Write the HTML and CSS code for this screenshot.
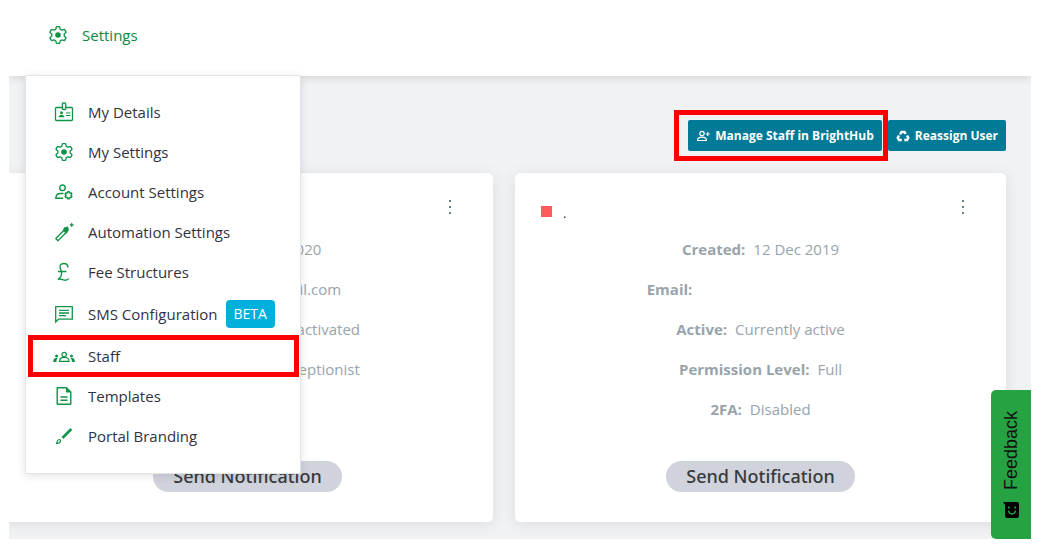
FILE: index.html
```html
<!DOCTYPE html>
<html lang="en">
<head>
<meta charset="utf-8">
<title>Staff settings</title>
<link rel="stylesheet" href="styles.css">
</head>
<body>
<svg class="sprite" aria-hidden="true">
  <symbol id="gear" viewBox="-10 -10 20 20">
    <path d="M-1.600-8.400H1.600L2.200-5.900 4-4.850 6.470-5.590 8.070-2.810 6.210-1.050V1.050L8.070 2.810 6.470 5.590 4 4.850 2.200 5.900 1.600 8.400H-1.600L-2.200 5.900-4 4.850-6.470 5.590-8.070 2.810-6.210 1.050V-1.050L-8.070-2.810-6.470-5.590-4-4.850-2.200-5.900z" fill="none" stroke="currentColor" stroke-width="1.300" stroke-linejoin="round"/>
    <circle r="2.800" fill="currentColor"/>
  </symbol>
</svg>

<div class="page">
  <header class="topbar">
    <div class="settings">
      <button class="settings-toggle" type="button" aria-expanded="true">
        <svg class="icon"><use href="#gear"/></svg>
        Settings
      </button>
      <nav class="menu" aria-label="Settings">
        <a class="menu-item" href="#">
          <svg class="icon" viewBox="0 0 20 20" fill="none" stroke="currentColor" stroke-width="1.300"><path d="M8.300 5.500H2.500a1 1 0 0 0-1 1v11a1 1 0 0 0 1 1h15a1 1 0 0 0 1-1v-11a1 1 0 0 0-1-1h-5.800"/><rect x="8.300" y="1" width="3.400" height="6.500" rx="1"/><path d="M12 11h4.500M12 13.500h4.500" stroke-width="1"/><circle cx="7.500" cy="10.800" r="1.500" fill="currentColor" stroke="none"/><path d="M4.500 15.200c0-3.400 6-3.400 6 0z" fill="currentColor" stroke="none"/></svg>
          My Details
        </a>
        <a class="menu-item" href="#">
          <svg class="icon"><use href="#gear"/></svg>
          My Settings
        </a>
        <a class="menu-item" href="#">
          <svg class="icon" viewBox="0 0 20 20" fill="none" stroke="currentColor" stroke-width="1.400"><circle cx="8.500" cy="5.800" r="2.800"/><path d="M9.500 11.500H6.500c-3 0-4.500 1.500-4.700 4.800h7.400"/><g transform="translate(14.500 13.200) scale(.42)"><path stroke-width="3.200" d="M-1.600-8.400H1.600L2.200-5.900 4-4.850 6.470-5.590 8.070-2.810 6.210-1.050V1.050L8.070 2.810 6.470 5.590 4 4.850 2.200 5.900 1.600 8.400H-1.600L-2.200 5.900-4 4.850-6.470 5.590-8.070 2.810-6.210 1.050V-1.050L-8.070-2.810-6.470-5.590-4-4.850-2.200-5.900z"/></g></svg>
          Account Settings
        </a>
        <a class="menu-item" href="#">
          <svg class="icon" viewBox="0 0 20 20"><path d="M1.800 16.500 10.500 7.800l2.200 2.200L4 18.700z" fill="none" stroke="currentColor" stroke-width="1.300" stroke-linejoin="round"/><path d="m9 8.500 1.300-3 3.500-.7.900 3.300-2.500 3.400zM17.700.8l.6 1.500 1.500.6-1.500.6-.6 1.500-.6-1.500-1.500-.6 1.500-.6z" fill="currentColor" stroke="currentColor" stroke-width=".5"/></svg>
          Automation Settings
        </a>
        <a class="menu-item" href="#">
          <svg class="icon" viewBox="0 0 20 20" fill="none" stroke="currentColor" stroke-width="1.400"><path d="M14 5.500c-.2-5.500-8-5-8-.8 0 1.500.8 2.800 1.300 4.300.9 3-.5 6.500-3.500 8.500 3-1.500 5 .8 7.500.8 1.500 0 2.700-.6 3.400-1.800M4 9.500h8.500"/></svg>
          Fee Structures
        </a>
        <a class="menu-item menu-item-badged" href="#">
          <svg class="icon" viewBox="0 0 20 20" fill="none" stroke="currentColor" stroke-width="1.300"><path d="M1.700 18V2.700h16.600v12.500H4.500z"/><path d="M5 6.300h10M5 9h10M5 11.700h7"/></svg>
          SMS Configuration
          <span class="badge">BETA</span>
        </a>
        <a class="menu-item menu-item-current" href="#" aria-current="page">
          <svg class="icon icon-wide" viewBox="0 0 22 20"><path d="M6.500 15.300h9.500c0-3-1.500-4-4.800-4s-4.700 1-4.700 4z" fill="none" stroke="currentColor" stroke-width="1.200"/><circle cx="11.200" cy="8.500" r="2.200" fill="none" stroke="currentColor" stroke-width="1.200"/><g fill="currentColor"><circle cx="3.600" cy="10" r="1.500"/><path d="M.3 15.900c0-3 .8-4 4.500-3.800-1 .8-1.300 1.800-1.300 3.800z"/><circle cx="18.500" cy="10" r="1.500"/><path d="M21.900 15.900c0-3-.8-4-4.500-3.800 1 .8 1.500 1.800 1.500 3.800z"/></g></svg>
          Staff
        </a>
        <a class="menu-item" href="#">
          <svg class="icon" viewBox="0 0 20 20" fill="none" stroke="currentColor" stroke-width="1.400"><path d="M3.200 1.700h9.300L16.800 6v12.300H3.200z" stroke-linejoin="round"/><path d="M6.500 11h7M6.500 14.300h7"/><path d="M12 1.500V6.500h5z" fill="currentColor" stroke="none"/></svg>
          Templates
        </a>
        <a class="menu-item" href="#">
          <svg class="icon" viewBox="0 0 20 20"><path d="m8.500 12 8.800-9" stroke="currentColor" stroke-width="2.600"/><path d="M2 17.500c1.500-.5.600-4 3.300-4 2 0 2 4-3.300 4z" fill="none" stroke="currentColor" stroke-width="1.200"/></svg>
          Portal Branding
        </a>
      </nav>
    </div>
  </header>

  <main class="content">
    <div class="actions">
      <div class="highlighted">
        <button class="action" type="button">
          <svg class="action-icon" viewBox="0 0 14 12" fill="none" stroke="currentColor" stroke-width="1.200"><circle cx="6" cy="3.500" r="2.200"/><path d="M1.500 10.500c0-2.500 1.500-3.300 4.500-3.300s4.500.8 4.500 3.300zM11.700 2v4M9.700 4h4"/></svg>
          Manage Staff in BrightHub
        </button>
      </div>
      <button class="action" type="button">
        <svg class="action-icon" viewBox="0 0 14 12" fill="none" stroke="currentColor" stroke-width="2.400"><path d="M4 4.500 5.500 2h3L9.700 4M11 5.500l1.300 2.300L11 10H8.300M5.800 10H3L1.700 7.800 3 5.500"/></svg>
        Reassign User
      </button>
    </div>

    <div class="cards">
      <article class="card">
        <div class="card-head">
          <span class="name"></span>
          <button class="more" type="button" aria-label="More options"><svg viewBox="0 0 4 16"><path d="M1 1h2v2H1zM1 7h2v2H1zM1 13h2v2H1z"/></svg></button>
        </div>
        <dl class="facts">
          <div><dt>Created:</dt><dd>11 Jul 2020</dd></div>
          <div><dt>Email:</dt><dd>user12@gmail.com</dd></div>
          <div><dt>Active:</dt><dd>Account is not activated</dd></div>
          <div><dt>Permission Level:</dt><dd>Receptionist</dd></div>
          <div><dt>2FA:</dt><dd>Disabled</dd></div>
        </dl>
        <button class="notify" type="button">Send Notification</button>
      </article>
      <article class="card">
        <div class="card-head">
          <span class="swatch"></span>
          <span class="name">.</span>
          <button class="more" type="button" aria-label="More options"><svg viewBox="0 0 4 16"><path d="M1 1h2v2H1zM1 7h2v2H1zM1 13h2v2H1z"/></svg></button>
        </div>
        <dl class="facts">
          <div><dt>Created:</dt><dd>12 Dec 2019</dd></div>
          <div><dt>Email:</dt><dd class="blank"></dd></div>
          <div><dt>Active:</dt><dd>Currently active</dd></div>
          <div><dt>Permission Level:</dt><dd>Full</dd></div>
          <div><dt>2FA:</dt><dd>Disabled</dd></div>
        </dl>
        <button class="notify" type="button">Send Notification</button>
      </article>
    </div>
  </main>

  <button class="feedback" type="button">
    <svg viewBox="0 0 16 16"><path d="M0 0h14a2 2 0 0 1 2 2v12a2 2 0 0 1-2 2H4a2 2 0 0 1-2-2V3z"/><path d="M5.500 8.500c.5 4.500 6.500 4.500 7 0" fill="none" stroke="#27a243" stroke-width="1.500"/><path d="M5 4.500h1.600v2H5zM11.400 4.500H13v2h-1.600z" fill="#27a243"/></svg>
    Feedback
  </button>
</div>
</body>
</html>
```
FILE: styles.css
```css
* {
  box-sizing: border-box;
}

body {
  margin: 0;
  background: #fff;
  font: 15px/20px "Open Sans", sans-serif;
}

button {
  border: 0;
  font: inherit;
  cursor: pointer;
}

.sprite {
  position: absolute;
  width: 0;
  height: 0;
}

.page {
  position: relative;
  margin: 0 24px 6px 9px;
  overflow: hidden;
}

.topbar {
  position: relative;
  z-index: 2;
  height: 76px;
  padding: 20px 39px;
  background: #fff;
  box-shadow: 0 1px 8px rgba(60, 64, 72, 0.2);
}

.settings-toggle {
  display: flex;
  align-items: center;
  gap: 14px;
  padding: 5px 0;
  background: none;
  color: #078b41;
}

.icon {
  flex: none;
  width: 20px;
  height: 20px;
  color: #129447;
}

.icon-wide {
  width: 22px;
  margin: 0 -1px;
}

.menu {
  position: absolute;
  top: 75px;
  left: 16px;
  width: 276px;
  padding: 16px 0 17px;
  border: 1px solid #e3e4e6;
  background: #fff;
  box-shadow: 0 2px 8px rgba(60, 64, 72, 0.15);
}

.menu-item {
  position: relative;
  display: flex;
  align-items: center;
  min-height: 40px;
  padding: 8px 20px 8px 28px;
  gap: 14px;
  color: #32323f;
  text-decoration: none;
  white-space: nowrap;
}

.badge {
  margin-left: -6px;
  padding: 3px 8px;
  border-radius: 4px;
  background: #00b0dc;
  color: #fff;
  font-size: 14px;
  line-height: 22px;
}

.menu-item-current::after,
.highlighted::after {
  content: "";
  position: absolute;
  border: 5px solid #f00;
}

.menu-item-current::after {
  inset: -1px 1px -1px 2px;
}

.content {
  padding: 44px 25px 17px 0;
  background: #f1f2f4;
  overflow: hidden;
}

.actions {
  display: flex;
  justify-content: flex-end;
  gap: 6px;
}

.highlighted {
  position: relative;
}

.highlighted::after {
  inset: -10px -6px -10px -14px;
}

.action {
  display: flex;
  align-items: center;
  gap: 5px;
  height: 31px;
  padding: 0 8px;
  border-radius: 2px;
  background: #007a96;
  color: #fff;
  font-size: 12px;
  font-weight: 700;
}

.action-icon {
  width: 14px;
  height: 12px;
}

.cards {
  display: grid;
  grid-template-columns: 1fr 1fr;
  gap: 22px;
  margin: 22px 0 0 -7px;
}

.card {
  display: flex;
  flex-direction: column;
  align-items: center;
  padding: 24px 26px 30px;
  border-radius: 5px;
  background: #fff;
  box-shadow: 0 2px 14px rgba(60, 64, 72, 0.12);
}

.card-head {
  display: flex;
  align-items: flex-start;
  align-self: stretch;
  gap: 11px;
  height: 32px;
}

.swatch {
  width: 11px;
  height: 11px;
  margin-top: 9px;
  background: #ff5b5b;
}

.name {
  padding-top: 6px;
  font-size: 13px;
  color: #333;
}

.more {
  display: flex;
  margin-left: auto;
  padding: 2px 15px;
  background: none;
}

.more svg {
  width: 4px;
  height: 16px;
  fill: #68808c;
}

.facts {
  margin: 0;
  color: #98a4ab;
}

.facts div {
  display: flex;
  justify-content: center;
  gap: 8px;
  padding: 10px 0;
}

.facts dt {
  font-weight: 700;
}

.facts dd {
  margin: 0;
}

.facts .blank {
  width: 174px;
}

.notify {
  margin-top: 32px;
  padding: 3px 20px;
  border-radius: 16px;
  background: #d0d3db;
  color: #38393c;
  font: 500 18px/25px "Noto Sans", sans-serif;
}

.feedback {
  position: absolute;
  z-index: 1;
  right: 0;
  bottom: 0;
  display: flex;
  align-items: center;
  gap: 12px;
  height: 149px;
  padding: 21px 11px;
  border-radius: 0 5px 5px 0;
  background: #27a243;
  color: #111;
  font: 18px/18px "Liberation Sans", sans-serif;
  writing-mode: vertical-rl;
  rotate: 180deg;
}

.feedback svg {
  width: 16px;
  height: 16px;
  rotate: 180deg;
}
```
